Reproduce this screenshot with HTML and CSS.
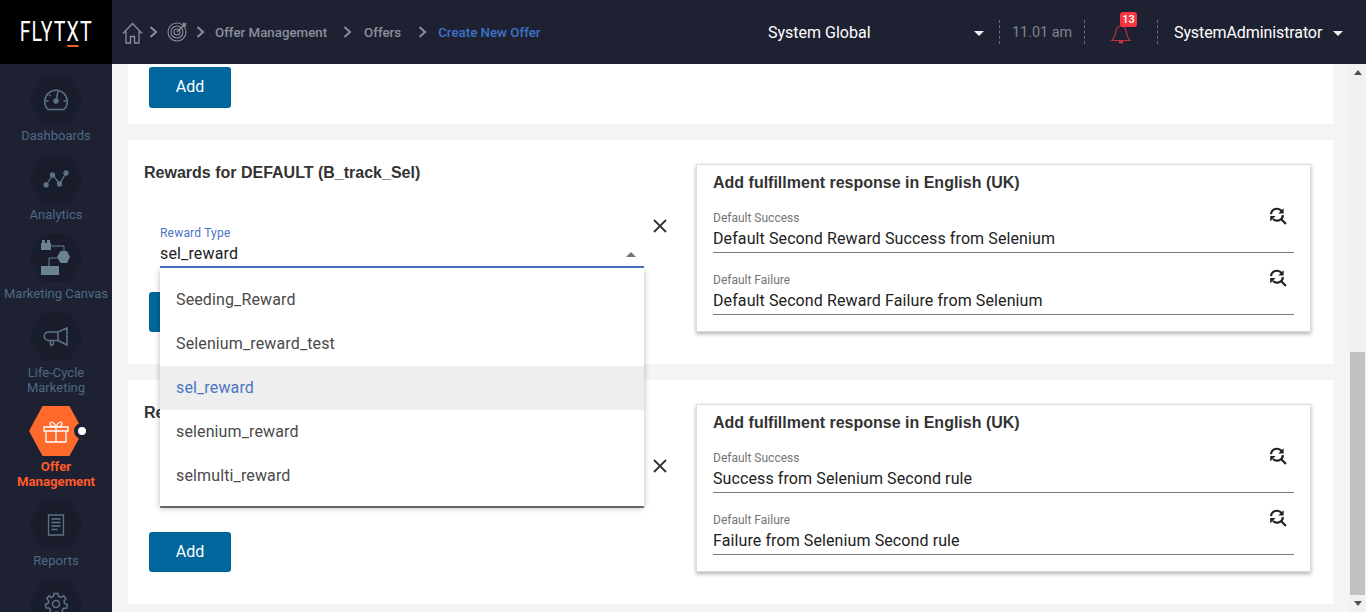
FILE: index.html
```html
<!DOCTYPE html>
<html lang="en">
<head>
<meta charset="utf-8">
<title>Create New Offer</title>
<link rel="stylesheet" href="styles.css">
</head>
<body>
<svg class="defs" width="0" height="0">
  <symbol id="i-find" viewBox="0 0 20 20">
    <path d="M3 8.200A6 6 0 0 1 13.600 5" fill="none" stroke="currentColor" stroke-width="2.200"/>
    <path d="M15.600 2.200v5.300h-5.300z" fill="currentColor"/>
    <path d="M15 9.200A6 6 0 0 1 5 13" fill="none" stroke="currentColor" stroke-width="2.200"/>
    <path d="M2.200 15.400v-5.300h5.300z" fill="currentColor"/>
    <path d="M13 13l5 5" stroke="currentColor" stroke-width="2.200"/>
  </symbol>
  <symbol id="i-x" viewBox="0 0 16 16">
    <path d="M2 2l12 12M14 2L2 14" stroke="currentColor" stroke-width="1.800" fill="none"/>
  </symbol>
</svg>

<header class="topbar">
  <div class="logo"><span class="logo-text">FLYT<span class="logo-x">X</span>T</span></div>
  <nav class="crumbs">
    <svg class="ic-home" width="21" height="22" viewBox="0 0 21 22" fill="none" stroke="#8b8f99" stroke-width="1.300"><path d="M1 11.500L10.500 1.500 20 11.500M4 9.500V21h4.500v-6.500h4V21H17V9.500"/></svg>
    <svg class="chev chev-1" width="9" height="12" viewBox="0 0 9 12" fill="none" stroke="#8b8f99" stroke-width="2"><path d="M1.500 1l5.500 5-5.500 5"/></svg>
    <svg class="ic-target" width="21" height="21" viewBox="0 0 21 21" fill="none" stroke="#8b8f99" stroke-width="1.100"><circle cx="10" cy="11" r="9"/><circle cx="10" cy="11" r="6"/><circle cx="10" cy="11" r="3"/><path d="M10 11L19 2M16.500 1.500v3h3" stroke-width="1.400"/></svg>
    <svg class="chev chev-2" width="9" height="12" viewBox="0 0 9 12" fill="none" stroke="#8b8f99" stroke-width="2"><path d="M1.500 1l5.500 5-5.500 5"/></svg>
    <span class="crumb crumb-offer">Offer Management</span>
    <svg class="chev chev-3" width="9" height="12" viewBox="0 0 9 12" fill="none" stroke="#8b8f99" stroke-width="2"><path d="M1.500 1l5.500 5-5.500 5"/></svg>
    <span class="crumb crumb-offers">Offers</span>
    <svg class="chev chev-4" width="9" height="12" viewBox="0 0 9 12" fill="none" stroke="#8b8f99" stroke-width="2"><path d="M1.500 1l5.500 5-5.500 5"/></svg>
    <span class="crumb crumb-active">Create New Offer</span>
  </nav>
  <div class="tools">
    <span class="scope">System Global</span>
    <span class="caret caret-scope"></span>
    <span class="dash dash-1"></span>
    <span class="clock">11.01 am</span>
    <span class="dash dash-2"></span>
    <span class="bell">
      <svg width="22" height="21" viewBox="0 0 22 21" fill="none" stroke="#c2323c" stroke-width="1.200"><path d="M2 17.500c2-2 3-3.500 3.500-7.500C6 5.500 8 3 11 3s5 2.500 5.500 7c.5 4 1.500 5.500 3.500 7.500z"/><path d="M9.500 18.500h3v1.500h-3z" fill="#c2323c"/></svg>
      <span class="badge">13</span>
    </span>
    <span class="dash dash-3"></span>
    <span class="user">SystemAdministrator</span>
    <span class="caret caret-user"></span>
  </div>
</header>

<div class="body-row">
  <aside class="sidebar">
    <a class="nav-item">
      <span class="hex"><svg width="26" height="24" viewBox="0 0 26 24" fill="none" stroke="#5d7383" stroke-width="1.500"><path d="M5 21.500a11.300 11.300 0 1 1 16 0z"/><path d="M15 3.500l-1.500 7"/><circle cx="13" cy="13" r="2" fill="#5d7383"/><path d="M3 13h2.500M20.500 13H23M6 6.500l1.500 1.500"/></svg></span>
      <span class="nav-label">Dashboards</span>
    </a>
    <a class="nav-item">
      <span class="hex"><svg width="26" height="20" viewBox="0 0 26 20" fill="#5d7383" stroke="#5d7383" stroke-width="1.300"><path d="M3 16L10 6l6.500 9L23 4" fill="none"/><circle cx="3" cy="16" r="2"/><circle cx="9.500" cy="6" r="2"/><circle cx="16.500" cy="15" r="2"/><circle cx="23" cy="4" r="2"/></svg></span>
      <span class="nav-label">Analytics</span>
    </a>
    <a class="nav-item">
      <span class="hex"><svg width="30" height="36" viewBox="0 0 30 36" fill="none"><path d="M10 6H23V11M16 18H8V26" stroke="#6b8290" stroke-width="1"/><path d="M0 3h1V0h3v3h2V0h3v3h1v7H0z" fill="#6b8290"/><path d="M19.500 11H26l3 6-3 6h-6.500L16 17z" fill="#6b8290"/><rect x="0" y="26" width="18" height="9" fill="#6b8290"/></svg></span>
      <span class="nav-label">Marketing Canvas</span>
    </a>
    <a class="nav-item nav-item-tight">
      <span class="hex"><svg width="26" height="20" viewBox="0 0 26 20" fill="none" stroke="#5d7383" stroke-width="1.500"><path d="M15 5H5.500a4 4 0 0 0 0 8.500H15zM15 5l9-4v17l-9-4.500M7 13.500l1 5 2.500-1.500-.5-3.500"/></svg></span>
      <span class="nav-label">Life-Cycle<br>Marketing</span>
    </a>
    <a class="nav-item nav-item-active">
      <span class="hex"><svg width="26" height="23" viewBox="0 0 26 23" fill="none" stroke="#fff" stroke-width="1.300"><path d="M1 7h24v4H1zM3 11h20v11H3zM13 7v15M13 7C10 7 6.500 6 7 3.500S11 1.500 13 7c2-5.500 6-6 6-3.500S16 7 13 7z"/></svg></span>
      <span class="nav-label">Offer<br>Management</span>
      <span class="nav-dot"></span>
    </a>
    <a class="nav-item">
      <span class="hex"><svg width="18" height="22" viewBox="0 0 18 22" fill="none" stroke="#5d7383" stroke-width="1.300"><path d="M1.500 1h15v20h-15zM4.500 5h9M4.500 8.500h9M4.500 12h9M4.500 15.500h6"/></svg></span>
      <span class="nav-label">Reports</span>
    </a>
    <a class="nav-item">
      <span class="hex"><svg width="24" height="24" viewBox="0 0 24 24" fill="none" stroke="#5d7383" stroke-width="1.500"><circle cx="12" cy="12" r="3.500"/><path d="M10 1.500h4l.6 3 2.400 1 2.600-1.700 2.400 3-2 2.300.6 2.400 2.900 1-.8 3.800-3-.1-1.500 2 1 2.900-3.500 1.500-1.700-2.500h-2.600l-1.700 2.500L5.600 20.900l1-2.900-1.500-2-3 .1-.8-3.800 2.900-1 .6-2.400-2-2.300 2.400-3L7 5.500l2.400-1z"/></svg></span>
    </a>
  </aside>

  <main class="content">
    <section class="card card-top">
      <button class="btn">Add</button>
    </section>

    <section class="card">
      <div class="rule-col">
        <h2 class="rule-title">Rewards for DEFAULT (B_track_Sel)</h2>
        <div class="field-row">
          <div class="field field-open">
            <label class="field-label">Reward Type</label>
            <div class="field-value">sel_reward<span class="arrow-up"></span></div>
            <ul class="menu">
              <li>Seeding_Reward</li>
              <li>Selenium_reward_test</li>
              <li class="menu-selected">sel_reward</li>
              <li>selenium_reward</li>
              <li>selmulti_reward</li>
            </ul>
          </div>
          <svg class="close" width="16" height="16"><use href="#i-x"/></svg>
        </div>
        <button class="btn" aria-label="Add"></button>
      </div>
      <div class="panel">
        <h3 class="panel-title">Add fulfillment response in English (UK)</h3>
        <div class="resp">
          <div class="resp-label">Default Success</div>
          <div class="resp-value">Default Second Reward Success from Selenium</div>
          <svg class="find" width="20" height="20"><use href="#i-find"/></svg>
        </div>
        <div class="resp">
          <div class="resp-label">Default Failure</div>
          <div class="resp-value">Default Second Reward Failure from Selenium</div>
          <svg class="find" width="20" height="20"><use href="#i-find"/></svg>
        </div>
      </div>
    </section>

    <section class="card">
      <div class="rule-col">
        <h2 class="rule-title">Rewards for DEFAULT (B_track_Sel)</h2>
        <div class="field-row">
          <div class="field">
            <div class="field-blank"></div>
          </div>
          <svg class="close" width="16" height="16"><use href="#i-x"/></svg>
        </div>
        <button class="btn">Add</button>
      </div>
      <div class="panel">
        <h3 class="panel-title">Add fulfillment response in English (UK)</h3>
        <div class="resp">
          <div class="resp-label">Default Success</div>
          <div class="resp-value">Success from Selenium Second rule</div>
          <svg class="find" width="20" height="20"><use href="#i-find"/></svg>
        </div>
        <div class="resp">
          <div class="resp-label">Default Failure</div>
          <div class="resp-value">Failure from Selenium Second rule</div>
          <svg class="find" width="20" height="20"><use href="#i-find"/></svg>
        </div>
      </div>
    </section>
  </main>

  <div class="scrollbar">
    <span class="sb-arrow sb-arrow-up"></span>
    <span class="sb-thumb"></span>
    <span class="sb-arrow sb-arrow-down"></span>
  </div>
</div>
</body>
</html>
```
FILE: styles.css
```css
* { box-sizing: border-box; }
html, body { margin: 0; height: 100%; }
body {
  width: 1366px;
  height: 612px;
  overflow: hidden;
  font-family: Roboto, "Liberation Sans", sans-serif;
  background: #f5f5f5;
  color: #212121;
  display: flex;
  flex-direction: column;
}
.defs { display: block; height: 0; }

/* top bar */
.topbar {
  height: 64px;
  flex: none;
  display: flex;
  align-items: center;
  background: #1d2132;
}
.logo {
  width: 112px;
  height: 64px;
  flex: none;
  background: #000;
  display: flex;
  align-items: center;
  justify-content: center;
}
.logo-text {
  color: #fff;
  font-size: 28px;
  font-weight: 400;
  letter-spacing: 1.5px;
  line-height: 30px;
  display: inline-block;
  transform: scaleX(.7);
  white-space: nowrap;
  margin-left: 1px;
}
.logo-x { position: relative; }
.logo-x::after {
  content: "";
  position: absolute;
  left: 1px;
  right: 2px;
  bottom: 1px;
  height: 2px;
  background: #e8622a;
}
.crumbs {
  display: flex;
  align-items: center;
  width: 460px;
  flex: none;
  padding-left: 10px;
  white-space: nowrap;
}
.ic-home { margin-top: 1px; }
.ic-target { margin-left: 9px; margin-top: -2px; }
.chev-1 { margin-left: 6px; }
.chev-2 { margin-left: 8px; }
.chev-3 { margin-left: 16px; }
.chev-4 { margin-left: 17px; }
.crumb {
  font-size: 13.3px;
  font-weight: 500;
  color: #8b8f99;
}
.crumb-offer { margin-left: 10px; }
.crumb-offers { margin-left: 12px; }
.crumb-active { margin-left: 11px; color: #3f72c9; }
.tools {
  flex: 1;
  display: flex;
  align-items: center;
  padding-left: 196px;
  color: #fff;
  font-size: 16px;
  white-space: nowrap;
}
.scope { width: 206px; }
.caret {
  width: 0;
  height: 0;
  margin-top: 3px;
  border-left: 5px solid transparent;
  border-right: 5px solid transparent;
  border-top: 5px solid #eee;
}
.dash {
  width: 0;
  height: 24px;
  border-left: 1px dashed #6a6e79;
}
.dash-1 { margin-left: 15px; }
.clock { margin-left: 12px; color: #80848e; font-size: 14.400px; width: 60px; }
.dash-2 { margin-left: 12px; }
.bell { position: relative; margin-left: 25px; width: 22px; height: 21px; margin-top: 3px; }
.bell svg { display: block; }
.badge {
  position: absolute;
  left: 10px;
  top: -11px;
  min-width: 17px;
  height: 15px;
  border-radius: 3px;
  background: #f9363f;
  color: #fff;
  font-size: 11px;
  font-weight: 500;
  line-height: 15px;
  text-align: center;
}
.dash-3 { margin-left: 25px; }
.user { margin-left: 16px; width: 149px; letter-spacing: -.1px; }
.caret-user { margin-left: 10px; }

/* body */
.body-row {
  flex: 1;
  min-height: 0;
  display: flex;
}
.sidebar {
  width: 112px;
  flex: none;
  background: #1d2132;
  padding-top: 12px;
  overflow: hidden;
}
.nav-item {
  position: relative;
  display: flex;
  flex-direction: column;
  align-items: center;
  margin-bottom: 12px;
  text-align: center;
  color: #4e6a84;
  font-size: 13px;
  line-height: 15px;
}
.nav-item-tight { margin-bottom: 11px; }
.hex {
  width: 54px;
  height: 48px;
  flex: none;
  display: flex;
  align-items: center;
  justify-content: center;
  background: #181c2b;
  clip-path: polygon(25% 0, 75% 0, 100% 50%, 75% 100%, 25% 100%, 0 50%);
}
.nav-label { margin-top: 4px; white-space: nowrap; }
.nav-item-active { color: #ff5a2a; font-weight: 700; font-size: 13.200px; }
.nav-item-active .hex { height: 50px; background: #ff6a2c; }
.nav-item-active .nav-label { margin-top: 3px; }
.nav-dot {
  position: absolute;
  left: 74px;
  top: 17px;
  width: 16px;
  height: 16px;
  border-radius: 50%;
  background: #fff;
  border: 4px solid #1d2132;
}

/* content */
.content {
  flex: 1;
  min-width: 0;
  padding: 0 16px;
  display: flex;
  flex-direction: column;
  gap: 16px;
  overflow: hidden;
}
.card {
  flex: none;
  height: 224px;
  display: flex;
  background: #fff;
  padding-left: 16px;
}
.card-top {
  height: 60px;
  padding: 3px 0 0 21px;
}
.btn {
  display: block;
  width: 82px;
  height: 40px;
  padding: 0 0 2px;
  border: 0;
  border-radius: 3px;
  background: #00669b;
  color: #fff;
  font: 400 16px Roboto, "Liberation Sans", sans-serif;
}
.card-top .btn { height: 41px; }
.rule-col {
  width: 552px;
  flex: none;
  padding-top: 23px;
}
.rule-col .btn { margin: 24px 0 0 5px; }
.rule-title {
  margin: 0 0 43px;
  font-family: "Liberation Sans", Arial, sans-serif;
  font-size: 16px;
  font-weight: 700;
  line-height: 20px;
  color: #333;
}
.field-row {
  display: flex;
  align-items: flex-start;
  padding-left: 16px;
}
.close { margin: -8px 0 0 8px; color: #333; flex: none; }
.field {
  position: relative;
  width: 484px;
  flex: none;
  border-bottom: 2px solid #7c7c7c;
  padding-bottom: 2px;
}
.field-open { border-bottom-color: #4a74c4; z-index: 5; }
.field-blank { height: 38px; }
.field-label {
  display: block;
  font-size: 12px;
  line-height: 14px;
  letter-spacing: .2px;
  color: #757575;
}
.field-open .field-label { color: #4a74c4; }
.field-value {
  position: relative;
  margin-top: 4px;
  font-size: 16px;
  line-height: 20px;
  letter-spacing: .15px;
  color: #212121;
}
.arrow-up {
  position: absolute;
  right: 8px;
  top: 8px;
  border-left: 5px solid transparent;
  border-right: 5px solid transparent;
  border-bottom: 5px solid #757575;
}
.menu {
  position: absolute;
  left: 0;
  right: 0;
  top: 100%;
  margin: 2px 0 0;
  padding: 10px 0 8px;
  list-style: none;
  background: #fff;
  box-shadow: 0 2px 6px rgba(0, 0, 0, .28);
}
.menu li {
  height: 44px;
  padding-left: 16px;
  font-size: 16px;
  line-height: 43px;
  letter-spacing: .13px;
  color: #4a4a4a;
}
.menu .menu-selected {
  background: #eeeeee;
  color: #4a74c4;
}
.panel {
  position: relative;
  width: 615px;
  height: 168px;
  flex: none;
  margin-top: 24px;
  border: 1px solid #dcdcdc;
  box-shadow: 0 2px 4px rgba(0, 0, 0, .3);
  padding: 8px 16px 0;
  background: #fff;
}
.panel-title {
  margin: 0 0 18px;
  font-family: "Liberation Sans", Arial, sans-serif;
  font-size: 16px;
  font-weight: 700;
  line-height: 20px;
  color: #333;
}
.resp {
  position: relative;
  height: 42px;
  margin-bottom: 20px;
  border-bottom: 1px solid #7c7c7c;
}
.resp-label {
  font-size: 12px;
  line-height: 14px;
  color: #757575;
}
.resp-value {
  margin-top: 4px;
  font-size: 16px;
  line-height: 20px;
  letter-spacing: .1px;
  color: #212121;
}
.find {
  position: absolute;
  right: 6px;
  top: -5px;
  color: #222;
}

/* scrollbar */
.scrollbar {
  width: 17px;
  flex: none;
  display: flex;
  flex-direction: column;
  align-items: center;
  background: #f1f1f1;
}
.sb-arrow {
  width: 0;
  height: 0;
  border-left: 4px solid transparent;
  border-right: 4px solid transparent;
  flex: none;
}
.sb-arrow-up { margin-top: 6px; border-bottom: 5px solid #505050; }
.sb-thumb {
  width: 15px;
  height: 243px;
  margin-top: 277px;
  background: #c1c1c1;
  flex: none;
}
.sb-arrow-down { margin-top: 6px; border-top: 5px solid #505050; }
```
